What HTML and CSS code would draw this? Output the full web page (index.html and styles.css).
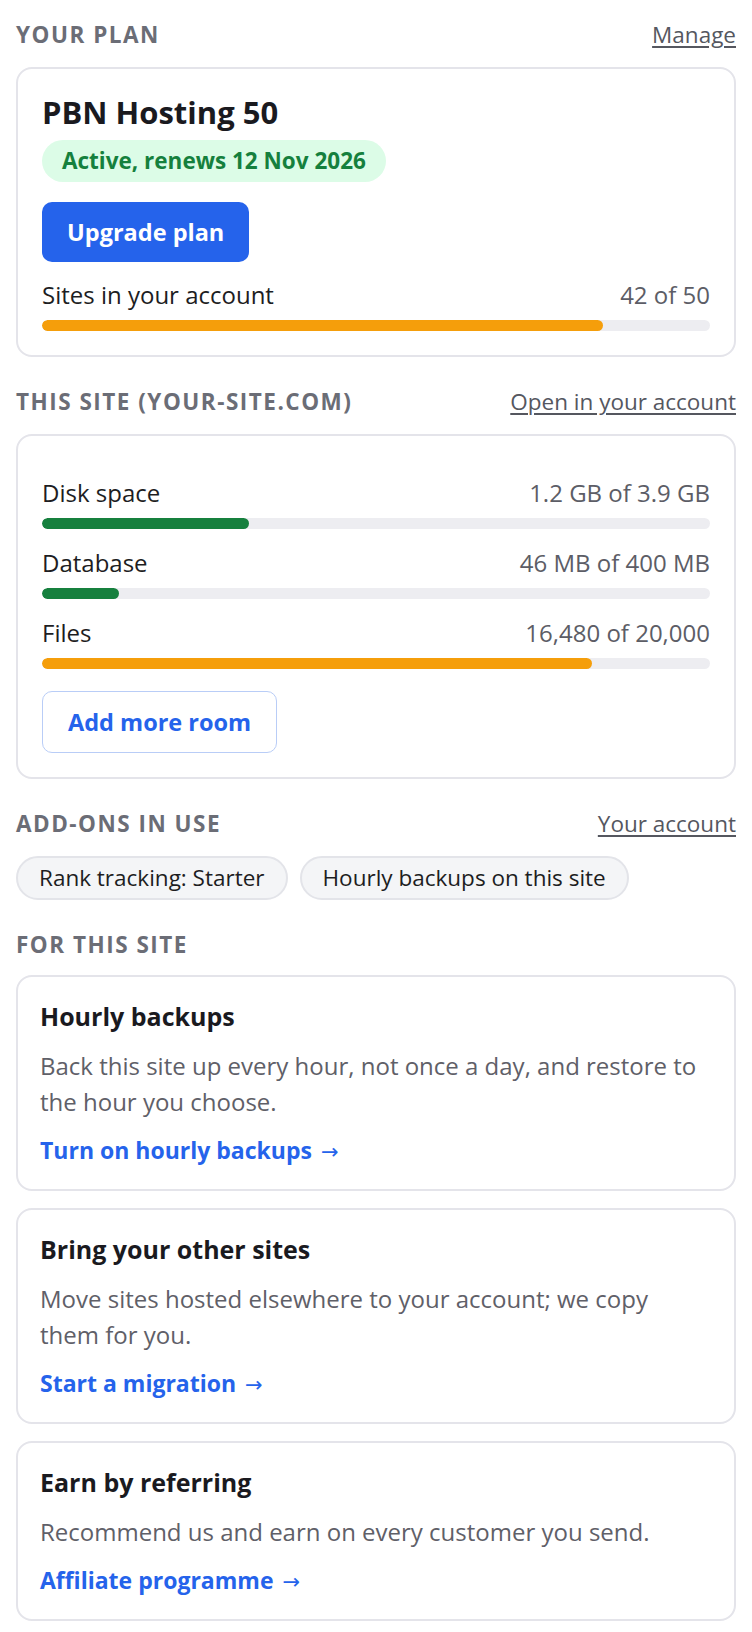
FILE: index.html
```html
<!DOCTYPE html>
<html lang="en">
<head>
  <meta charset="UTF-8" />
  <meta name="viewport" content="width=device-width, initial-scale=1.0"/>
  <title>Your plan - Hosting</title>
  <link rel="stylesheet" href="styles.css">
</head>
<body>
  <div class="page">

    <section class="section">
      <div class="section-head">
        <h2>Your plan</h2>
        <a href="#" class="head-link">Manage</a>
      </div>
      <div class="card plan">
        <h1>PBN Hosting 50</h1>
        <span class="status">Active, renews 12 Nov 2026</span>
        <button class="btn btn-primary">Upgrade plan</button>
        <div class="meter">
          <div class="meter-row">
            <span>Sites in your account</span>
            <span class="meter-value">42 of 50</span>
          </div>
          <div class="track"><div class="fill warn" style="width: 84%"></div></div>
        </div>
      </div>
    </section>

    <section class="section">
      <div class="section-head">
        <h2>This site (your-site.com)</h2>
        <a href="#" class="head-link">Open in your account</a>
      </div>
      <div class="card usage">
        <div class="meters">
          <div class="meter">
            <div class="meter-row">
              <span>Disk space</span>
              <span class="meter-value">1.2 GB of 3.9 GB</span>
            </div>
            <div class="track"><div class="fill ok" style="width: 31%"></div></div>
          </div>
          <div class="meter">
            <div class="meter-row">
              <span>Database</span>
              <span class="meter-value">46 MB of 400 MB</span>
            </div>
            <div class="track"><div class="fill ok" style="width: 11.5%"></div></div>
          </div>
          <div class="meter">
            <div class="meter-row">
              <span>Files</span>
              <span class="meter-value">16,480 of 20,000</span>
            </div>
            <div class="track"><div class="fill warn" style="width: 82.4%"></div></div>
          </div>
        </div>
        <button class="btn btn-outline">Add more room</button>
      </div>
    </section>

    <section class="section">
      <div class="section-head">
        <h2>Add-ons in use</h2>
        <a href="#" class="head-link">Your account</a>
      </div>
      <div class="chips">
        <span class="chip">Rank tracking: Starter</span>
        <span class="chip">Hourly backups on this site</span>
      </div>
    </section>

    <section class="section">
      <div class="section-head plain">
        <h2>For this site</h2>
      </div>
      <div class="offers">
        <div class="card offer">
          <h3>Hourly backups</h3>
          <p>Back this site up every hour, not once a day, and restore to the hour you choose.</p>
          <a href="#" class="offer-link">Turn on hourly backups <span class="arrow">→</span></a>
        </div>
        <div class="card offer">
          <h3>Bring your other sites</h3>
          <p>Move sites hosted elsewhere to your account; we copy them for you.</p>
          <a href="#" class="offer-link">Start a migration <span class="arrow">→</span></a>
        </div>
        <div class="card offer">
          <h3>Earn by referring</h3>
          <p>Recommend us and earn on every customer you send.</p>
          <a href="#" class="offer-link">Affiliate programme <span class="arrow">→</span></a>
        </div>
      </div>
    </section>

  </div>
</body>
</html>
```

FILE: styles.css
```css
* {
  box-sizing: border-box;
}
body {
  margin: 0;
  font-family: "Open Sans", "Noto Sans", sans-serif;
  font-size: 24px;
  line-height: 36px;
  color: #1d1d22;
  background: #fff;
}
.page {
  padding: 18px 16px 24px;
}
.section {
  margin-bottom: 28px;
}

/* Section titles with a link on the right */
.section-head {
  display: flex;
  justify-content: space-between;
  align-items: baseline;
  line-height: 33px;
  margin-bottom: 16px;
}
.section-head.plain {
  margin-bottom: 14px;
}
.section-head h2 {
  margin: 0;
  font-size: 22.5px;
  font-weight: 700;
  letter-spacing: 1.5px;
  text-transform: uppercase;
  color: #6b6d76;
}
.head-link {
  font-size: 22.5px;
  color: #55575f;
  text-decoration: underline;
  text-decoration-thickness: 1.5px;
  text-underline-offset: 3px;
}

.card {
  background: #fff;
  border: 2px solid #e4e4ea;
  border-radius: 16px;
  padding: 24px;
}

/* Plan card */
.plan {
  display: flex;
  flex-direction: column;
  align-items: flex-start;
}
.plan h1 {
  margin: 0 0 9px;
  font-size: 31px;
  line-height: 38px;
  font-weight: 700;
  color: #1a1a1f;
}
.status {
  display: inline-block;
  margin-bottom: 20px;
  padding: 6px 20px;
  font-size: 22.5px;
  line-height: 30px;
  font-weight: 700;
  color: #15803d;
  background: #dcfce7;
  border-radius: 999px;
}
.plan .btn {
  margin-bottom: 15px;
}
.plan .meter {
  align-self: stretch;
}

.btn {
  font-family: inherit;
  font-size: 23.5px;
  line-height: 36px;
  font-weight: 700;
  padding: 12px 25px;
  border-radius: 10px;
  cursor: pointer;
}
.btn-primary {
  background: #2563eb;
  color: #fff;
  border: none;
}
.btn-outline {
  background: #fff;
  color: #2563eb;
  border: 1px solid #b9cdf7;
}

/* Usage meters */
.meters {
  display: flex;
  flex-direction: column;
  gap: 16px;
  padding-top: 15px;
}
.meter-row {
  display: flex;
  justify-content: space-between;
  margin-bottom: 7px;
}
.meter-value {
  color: #5c5d66;
}
.track {
  height: 11px;
  background: #ededf1;
  border-radius: 6px;
  overflow: hidden;
}
.fill {
  height: 100%;
  border-radius: 6px;
}
.fill.ok {
  background: #16803e;
}
.fill.warn {
  background: #f59e0b;
}
.usage .btn {
  margin-top: 22px;
}

/* Add-on chips */
.chips {
  display: flex;
  flex-wrap: wrap;
  gap: 12px;
}
.chip {
  padding: 3px 21px;
  font-size: 22.5px;
  line-height: 34px;
  background: #f4f5f7;
  border: 2px solid #e3e4e9;
  border-radius: 999px;
}

/* Offers */
.offers {
  display: flex;
  flex-direction: column;
  gap: 17px;
}
.offer {
  padding: 22px 22px 19px;
}
.offer h3 {
  margin: 0;
  font-size: 25px;
  line-height: 34px;
  font-weight: 700;
  color: #1a1a1f;
}
.offer p {
  margin: 15px 0 12px;
  color: #5f6068;
}
.offer-link {
  display: inline-block;
  font-size: 23px;
  color: #2563eb;
  font-weight: 700;
  text-decoration: none;
}
.arrow {
  margin-left: 3px;
  font-family: "DejaVu Sans", sans-serif;
  font-size: 21px;
  font-weight: 400;
}
```
